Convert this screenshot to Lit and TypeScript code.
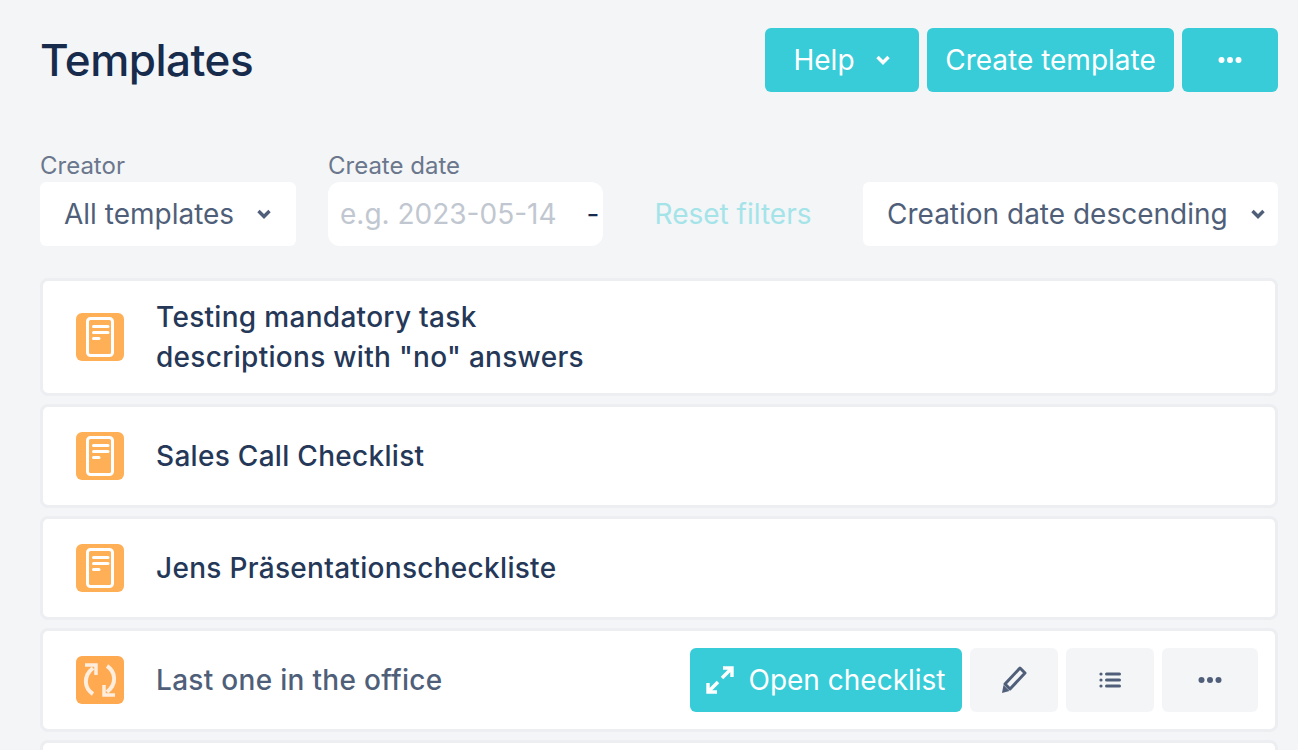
import { LitElement, html, css, svg } from "lit";
import { customElement } from "lit/decorators.js";

const chevron = html`<svg class="chev" viewBox="0 0 16 12" width="16" height="12" aria-hidden="true"><path d="M2.5 3 L8 8.5 L13.5 3" fill="none" stroke="currentColor" stroke-width="3.4"/></svg>`;
const dots = html`<svg viewBox="0 0 24 8" width="24" height="8" aria-hidden="true"><circle cx="3.5" cy="4" r="3" fill="currentColor"/><circle cx="12" cy="4" r="3" fill="currentColor"/><circle cx="20.5" cy="4" r="3" fill="currentColor"/></svg>`;
const docIcon = svg`<rect width="48" height="48" rx="6" fill="#ffb057"/><rect x="11.5" y="5.5" width="25" height="37" rx="3" fill="none" stroke="#fff" stroke-width="3"/><path d="M17.5 13.5H32M17.5 19.5H32M17.5 25.5H23" stroke="#fff" stroke-width="3" stroke-linecap="round" fill="none"/>`;
const syncIcon = svg`<rect width="48" height="48" rx="6" fill="#ffa950"/><g fill="none" stroke="#ffeedd" stroke-width="4"><path d="M17 38C8 32 7 20 17 12"/><path d="M9 9H20V19" stroke-width="3.5"/><path d="M31 10C40 16 41 28 31 36"/><path d="M39 39H28V29" stroke-width="3.5"/></g>`;

@customElement("app-root")
export class AppRoot extends LitElement {
  static styles = css`
    :host { display: block; height: 750px; overflow: hidden; background: #f3f5f7; font-family: Inter, "Liberation Sans", sans-serif; font-size: 28px; color: #172b4d; }
    .page { padding: 28px 20px 0 40px; }
    .head { display: flex; justify-content: space-between; align-items: center; height: 64px; }
    h1 { margin: 0; font-size: 44px; font-weight: 500; letter-spacing: -0.5px; color: #172b4d; }
    .actions { display: flex; gap: 8px; }
    .btn { display: flex; align-items: center; justify-content: center; height: 64px; box-sizing: border-box; border-radius: 6px; background: #38ccd8; color: #fff; font-size: 28px; white-space: nowrap; }
    .help { width: 154px; gap: 20px; }
    .create { width: 247px; }
    .more { width: 96px; }
    .filters { display: flex; align-items: flex-end; margin-top: 58px; }
    .field { display: flex; flex-direction: column; }
    label { font-size: 24px; line-height: 32px; color: #6b778c; }
    .control { display: flex; align-items: center; height: 64px; box-sizing: border-box; background: #fff; border-radius: 6px; color: #505f79; }
    .creator { width: 256px; padding-left: 24px; gap: 22px; }
    .date { width: 275px; padding-left: 12px; border-radius: 12px; color: #c1c7d0; margin-left: 32px; }
    .field.d { margin-left: 32px; }
    .field.d .date { margin-left: 0; }
    .dash { color: #172b4d; margin-left: 30px; }
    .reset { width: 260px; height: 64px; display: flex; align-items: center; justify-content: center; color: #a4e4e9; flex: none; }
    .sort { width: 415px; padding-left: 24px; gap: 22px; }
    .rows { display: flex; flex-direction: column; gap: 8px; margin-top: 32px; }
    .row { display: flex; align-items: center; box-sizing: border-box; min-height: 104px; border: 3px solid #eceef1; border-radius: 8px; background: #fff; padding: 12px 17px 12px 33px; line-height: 40px; font-weight: 500; letter-spacing: 0.3px; color: #253858; }
    .row.two { min-height: 118px; }
    .row svg.ic { flex: none; margin-right: 32px; }
    .name { flex: 1; }
    .row.muted .name { color: #505f79; }
    .ops { display: flex; gap: 8px; font-weight: 400; letter-spacing: 0; }
    .open { width: 272px; gap: 14px; }
    .tool { display: flex; align-items: center; justify-content: center; width: 88px; height: 64px; background: #f4f5f7; border-radius: 6px; color: #505f79; }
    .tool.w { width: 96px; }
  `;

  render() {
    return html`<div class="page">
      <div class="head">
        <h1>Templates</h1>
        <div class="actions">
          <div class="btn help">Help ${chevron}</div>
          <div class="btn create">Create template</div>
          <div class="btn more">${dots}</div>
        </div>
      </div>
      <div class="filters">
        <div class="field"><label>Creator</label><div class="control creator">All templates ${chevron}</div></div>
        <div class="field d"><label>Create date</label><div class="control date">e.g. 2023-05-14<span class="dash">-</span></div></div>
        <div class="reset">Reset filters</div>
        <div class="control sort">Creation date descending ${chevron}</div>
      </div>
      <div class="rows">
        <div class="row two"><svg class="ic" viewBox="0 0 48 48" width="48" height="48">${docIcon}</svg><div class="name">Testing mandatory task<br />descriptions with "no" answers</div></div>
        <div class="row"><svg class="ic" viewBox="0 0 48 48" width="48" height="48">${docIcon}</svg><div class="name">Sales Call Checklist</div></div>
        <div class="row"><svg class="ic" viewBox="0 0 48 48" width="48" height="48">${docIcon}</svg><div class="name">Jens Präsentationscheckliste</div></div>
        <div class="row muted"><svg class="ic" viewBox="0 0 48 48" width="48" height="48">${syncIcon}</svg><div class="name">Last one in the office</div>
          <div class="ops">
            <div class="btn open"><svg viewBox="0 0 28 28" width="28" height="28"><g fill="none" stroke="#fff" stroke-width="3.4"><path d="M16 12L25 3M17 2H26V11"/><path d="M12 16L3 25M2 17V26H11"/></g></svg>Open checklist</div>
            <div class="tool"><svg viewBox="0 0 28 30" width="28" height="30"><path d="M20 3L25 8L10 24L5 19Z" fill="none" stroke="currentColor" stroke-width="3" stroke-linejoin="round"/><path d="M2 28L3.5 20L9.5 26Z" fill="currentColor"/></svg></div>
            <div class="tool"><svg viewBox="0 0 22 18" width="22" height="18"><g fill="currentColor"><circle cx="2" cy="3" r="1.6"/><circle cx="2" cy="9" r="1.6"/><circle cx="2" cy="15" r="1.6"/><rect x="6" y="1.5" width="16" height="3" rx="1.5"/><rect x="6" y="7.5" width="16" height="3" rx="1.5"/><rect x="6" y="13.5" width="16" height="3" rx="1.5"/></g></svg></div>
            <div class="tool w">${dots}</div>
          </div>
        </div>
        <div class="row"></div>
      </div>
    </div>`;
  }
}
